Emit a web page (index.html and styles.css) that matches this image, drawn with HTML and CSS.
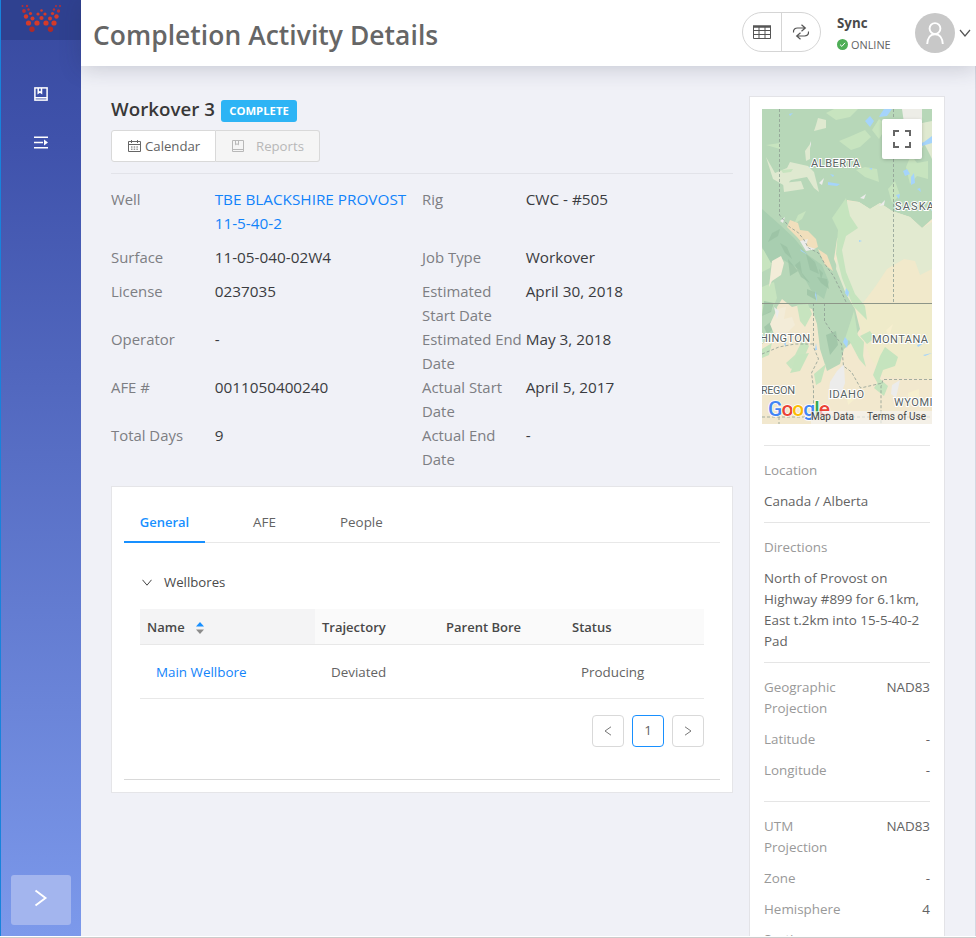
FILE: index.html
```html
<!DOCTYPE html>
<html lang="en">
<head>
<meta charset="utf-8">
<title>Completion Activity Details</title>
<link rel="stylesheet" href="styles.css">
</head>
<body>
<div class="app">
  <aside class="sidebar">
    <div class="brand">
      <svg width="40" height="28" viewBox="0 0 40 28" fill="#d63a28">
        <g fill="#b92f35"><circle cx="1.5" cy="2" r="1"/><circle cx="6" cy="2" r="1.2"/><circle cx="35" cy="2" r="1"/><circle cx="39" cy="2" r="1"/><circle cx="3" cy="7" r="1.9"/><circle cx="7.500" cy="5.500" r="1.200"/><circle cx="33" cy="5.500" r="1.200"/><circle cx="37.500" cy="7" r="1.700"/></g>
        <circle cx="5" cy="12.500" r="2.200"/><circle cx="9.500" cy="9.500" r="1.600"/><circle cx="31.500" cy="9.500" r="1.600"/><circle cx="35.500" cy="12.500" r="2.200"/><circle cx="20.500" cy="6.500" r="1.300"/><circle cx="17" cy="10" r="1.600"/><circle cx="24" cy="10" r="1.600"/><circle cx="11.500" cy="14.500" r="2"/><circle cx="20.500" cy="14" r="2.100"/><circle cx="29" cy="14.500" r="2"/><circle cx="7.500" cy="19" r="2.600"/><circle cx="16" cy="19" r="2.600"/><circle cx="25" cy="19" r="2.600"/><circle cx="33" cy="19" r="2.600"/>
        <circle cx="11" cy="25.300" r="2.700" fill="#ac2a2a"/><circle cx="29.500" cy="25.300" r="2.700" fill="#ac2a2a"/>
      </svg>
    </div>
    <nav class="side-nav">
      <svg width="14" height="14" viewBox="0 0 14 14" fill="none" stroke="#fff" stroke-width="1.5"><rect x=".9" y=".9" width="12.200" height="12.200"/><path d="M4.200 1v5l1.700-1.200L7.500 6V1M1 10.800h12"/></svg>
      <svg width="16" height="13" viewBox="0 0 16 13" fill="none" stroke="#fff" stroke-width="1.600"><path d="M1 1.200h14M1 6.500h9M1 11.800h14"/><path d="M11 3.500v6l4-3z" fill="#fff" stroke="none"/></svg>
    </nav>
    <button class="expand" type="button" aria-label="Expand"><svg width="14" height="18" viewBox="0 0 14 18" fill="none" stroke="#fff" stroke-width="1.900"><path d="M1.500 1.500 11.500 9 1.500 16.500"/></svg></button>
  </aside>

  <div class="page">
    <header class="topbar">
      <h1>Completion Activity Details</h1>
      <div class="pill">
        <span><svg width="18" height="14" viewBox="0 0 18 14" fill="none" stroke="#555" stroke-width="1"><path d="M.5 1.500h17v12H.5zM.5 5.500h17M.5 9.500h17M6 2v11.500M12 2v11.500"/><path d="M0 1.500h18" stroke-width="2.500"/></svg></span>
        <span><svg width="18" height="16" viewBox="0 0 18 16" fill="none" stroke="#555" stroke-width="1.200"><path d="M1.500 8.500C1 5 3.500 4 5.500 4H13M9.500 .8 13.300 4 9.500 7.200M16.500 7.500c.5 3.500-2 4.500-4 4.500H5M8.500 8.800 4.700 12l3.800 3.200"/></svg></span>
      </div>
      <div class="sync">
        <strong>Sync</strong>
        <span class="status"><svg width="11" height="11" viewBox="0 0 11 11"><circle cx="5.500" cy="5.500" r="5.500" fill="#4fae57"/><path d="M3 5.600 4.900 7.400 8 3.800" fill="none" stroke="#fff"/></svg>ONLINE</span>
      </div>
      <div class="avatar"><svg width="18" height="23" viewBox="0 0 18 23" fill="none" stroke="#fff" stroke-width="1.900"><circle cx="9" cy="6.500" r="5.400"/><path d="M1.200 22c.2-5.700 3-9.800 7.800-9.800s7.600 4.100 7.800 9.800"/></svg></div>
      <svg class="caret" width="12" height="8" viewBox="0 0 12 8" fill="none" stroke="#555" stroke-width="1.200"><path d="M1 1l5 6 5-6"/></svg>
    </header>

    <div class="content">
      <main class="main">
        <div class="heading"><h2>Workover 3</h2><span class="tag">COMPLETE</span></div>
        <div class="actions">
          <button type="button"><svg width="13" height="12" viewBox="0 0 13 12" fill="none" stroke="#666"><path d="M.5 1.500h12v10H.5zM.5 4.500h12M3.500 0v3M9.500 0v3"/><path d="M3 7h7.500M3 9.200h7.500" stroke-dasharray="1.500 1.200"/></svg><span>Calendar</span></button>
          <button type="button" disabled><svg width="12" height="12" viewBox="0 0 12 12" fill="none" stroke="#b8b8b8"><path d="M.5.500h11v11H.5zM.5 9.500h11M3.500.500v4.300L5 3.800l1.500 1V.5"/></svg><span>Reports</span></button>
        </div>
        <dl class="details">
          <dt>Well</dt><dd><a>TBE BLACKSHIRE PROVOST<br>11-5-40-2</a></dd><dt>Rig</dt><dd>CWC - #505</dd>
          <dt>Surface</dt><dd>11-05-040-02W4</dd><dt>Job Type</dt><dd>Workover</dd>
          <dt>License</dt><dd>0237035</dd><dt>Estimated<br>Start Date</dt><dd>April 30, 2018</dd>
          <dt>Operator</dt><dd>-</dd><dt>Estimated End<br>Date</dt><dd>May 3, 2018</dd>
          <dt>AFE #</dt><dd>0011050400240</dd><dt>Actual Start<br>Date</dt><dd>April 5, 2017</dd>
          <dt>Total Days</dt><dd>9</dd><dt>Actual End<br>Date</dt><dd>-</dd>
        </dl>
        <section class="card">
          <div class="tabs"><span class="tab active">General</span><span class="tab afe">AFE</span><span class="tab">People</span></div>
          <div class="panel">
            <div class="panel-title"><svg width="10" height="7" viewBox="0 0 10 7" fill="none" stroke="#444"><path d="M.5.800 5 6.200 9.500.800"/></svg><span>Wellbores</span></div>
            <table>
              <colgroup><col class="c1"><col class="c2"><col class="c3"><col></colgroup>
              <thead><tr><th class="sorted">Name<svg width="8" height="12" viewBox="0 0 8 12"><path d="M0 4.500 4 0l4 4.500z" fill="#1890ff"/><path d="M0 7.500 4 12l4-4.500z" fill="#8c8c8c"/></svg></th><th>Trajectory</th><th>Parent Bore</th><th>Status</th></tr></thead>
              <tbody><tr><td><a>Main Wellbore</a></td><td>Deviated</td><td></td><td>Producing</td></tr></tbody>
            </table>
            <div class="pager">
              <span><svg width="8" height="10" viewBox="0 0 8 10" fill="none" stroke="#777"><path d="M7 .8 1 5l6 4.200"/></svg></span>
              <span class="current">1</span>
              <span><svg width="8" height="10" viewBox="0 0 8 10" fill="none" stroke="#777"><path d="M1 .8 7 5 1 9.200"/></svg></span>
            </div>
          </div>
        </section>
      </main>

      <aside class="info">
        <div class="map">
          <svg width="170" height="315" viewBox="0 0 170 315">
            <rect width="170" height="315" fill="#f2e8ce"/>
            <path d="M0 0H170V110L160 119 148 108 130 102 118 94 108 100 97 93 85 91 83 118 75 130 72 150 78 165 84 185 93 200 98 220 88 235 82 240 78 255 65 262 58 240 55 215 50 200 38 196 30 198 20 190 15 198 12 225 0 235Z" fill="#b7d7b8"/>
            <path d="M78 120L85 92 97 93 108 100 118 94 130 102 148 108 160 119 170 113V194H90L84 185 74 160Z" fill="#e2ead0"/>
            <path d="M125 160l17-10 11 2 5 14 12-6v34H101l12-16z" fill="#f1e9cb"/>
            <path d="M94 194h76v76l-48-2-14-20-8-22z" fill="#efebca"/>
            <path d="M84 89l4 18 8 12-12 8-4 14 4 22 9 22 10 12 2 14-14-14-11-28-6-24 2-24-6-12zM92 202l4 26 8 30-7-8-10-19-6 5z" fill="#c5e4be"/>
            <g fill="#dfe9d0"><path d="M4 48l9 16 12-5 3-6 18 4 6 6 5 20-5-4-7-11-16 3-6 6-12-7zM44 52l-1-10 5-7v15zM54 16l2-7 8 2v8l-12 3zM21 74l18-2 3 8-20 3zM160 14l10-2v38l-8-16-5 14-8 2-6-7 6-14z"/></g>
            <path d="M140 0h20v28h-16z" fill="#edede7"/>
            <g fill="#c7e4bf"><path d="M77 32l10-4 16-7 6 7-11 10-9 3zM103 58l12 2 2 13-14-5-9-7zM64 4l8-4h24l-8 8-14 3zM117 10l8 7-8 13-7-9zM144 58l5-12 6 8 11-2v18l-11-3-7 8zM36 106l8-4-4 8-8 5zM4 36l14-2v6zM19 61l12-1-2 3-8 1zM0 140l12 6-4 13-8 4zM0 178l12-5 3 16-5 12-10 6zM35 196l11-1 4 10-7 13-5-6zM33 246l8-16 6 7-6 14-12 9-5-6zM126 80l7-8 5 14-8 8z"/></g>
            <path d="M0 100l17 15 15 14 14 17 14 10 7 17-5 17-13-9-11-20-18-11-11 4-9-16z" fill="#a8ceb0"/>
            <g fill="#96bfa2" opacity=".65"><path d="M44 145l9 8 4 12-9-4zM55 168l10 2 2 10-8-6zM10 124l8-4-2 7-10 6zM26 150l10 12-8 5zM45 180l10 4-1 7-9-5zM2 192l10 2-3 9-9 4zM18 134l7 4 5 12-7-6zM38 152l2 12 8 10-9-6-6-12zM2 218l9-7 2 8-8 6zM57 160l4 4-2 7zM64 226l10-4 2 14-8 10z"/></g>
            <path d="M10 152l9-5 3 7-3 12-9 6-3 6zM15 200l9-2-2 12 8-2 3 8-14 14-7-5-4-10z" fill="#f3ecd8"/>
            <g fill="#f1dfbc"><path d="M28 111l8 3 2 7 8 1 8 8 2 8-6 3-9-6-6-7-10-10zM56 140l9 6 6 16-8-6z"/></g>
            <g fill="#ececeb"><path d="M75 262l7-7 1 19-5 14-12 3 2-18zM130 276l8-5-4 18-5-4zM38 132l8-2-2 7 10 3-10 2zM18 112l5-4-2 6zM57 74l5-5-2 7zM98 89l6-4-2 5zM117 97l6-6-1 5zM12 198l5 4-2 8zM48 35l1-3v7z"/></g>
            <g fill="#f6efcf"><path d="M84 281l8 10-6 5zM146 284l11-4v12l-10 4zM124 221l7-6-4 13z"/></g>
            <g fill="#c5e4be"><path d="M98 227l10-5 5 7-8 6zM118 247l5-9 13 10-3 9-12 4-5 14-5-9zM29 262l6-16 12-2-9 18-10 2zM52 265l12-10-5 18-5 3zM0 240l10-6-3 12-7 3zM118 270l8 7-4 10-10-8zM92 222l10 11-1 15-8-7z"/></g>
            <g fill="#a5d4fb"><path d="M103 12l5-5 4 5-4 6zM118 6l4-6h8l-5 7-8 1zM141 62l4-2 3 5-5 2zM149 68l3-4 1 10-4 2zM157 35l5-2 8-6v7l-10 3zM66 73l12 2-3 2-9-1zM68 65l4 1-1 2zM134 86l4-1-1 5zM155 80l3-1 1 4zM84 179l3 4-1 5-3-4zM83 228l3 4-1 7-4-6zM53 241l1-7 1 7zM38 140l8 6-7-4zM54 182l1 11-2-7zM22 235l2-3v6zM155 236l10-4-9 6zM97 131l3 1-3 1zM27 5l4-1-3 3zM107 59h3v2zM161 246l9-2-7 3z"/></g>
            <g fill="none" stroke="#8f9e93" stroke-opacity=".8" stroke-dasharray="3 2"><path d="M17.500 0v106l10 12 8 5 6 7 5 9 10 5 7 12 8 11 7 14 6 13M131.500 0v194M51.500 194v44l5 12-7 14 2 15v29M62.500 194v18l8 12 9 11 2 22 8 6 9 16 22-5M0 245l17-7 16-3h19M170 270.500h-49l-2 7v38M0 308h170M17 308v7"/></g>
            <path d="M0 194.500h170" stroke="#8d9588"/>
            <g class="place"><text x="49" y="58" textLength="49">ALBERTA</text><text x="133" y="101" textLength="46">SASKAT</text><text x="-9" y="233" textLength="57">SHINGTON</text><text x="110" y="234" textLength="56">MONTANA</text><text x="-8" y="285" textLength="41">OREGON</text><text x="67" y="289" textLength="35">IDAHO</text><text x="132" y="297" textLength="55">WYOMING</text></g>
            <g class="google"><text x="6" y="307" textLength="62"><tspan fill="#4285f4">G</tspan><tspan fill="#ea4335">o</tspan><tspan fill="#fbbc05">o</tspan><tspan fill="#4285f4">g</tspan><tspan fill="#34a853">l</tspan><tspan fill="#ea4335">e</tspan></text></g>
            <path d="M49 302h121v13H49z" fill="#f5f5f5" fill-opacity=".65"/>
            <g class="credit"><text x="49" y="311" textLength="43">Map Data</text><text x="105" y="311" textLength="59">Terms of Use</text></g>
          </svg>
          <span class="fullscreen"><svg width="18" height="18" viewBox="0 0 18 18" fill="none" stroke="#666" stroke-width="2"><path d="M1 6V1h5M12 1h5v5M17 12v5h-5M6 17H1v-5"/></svg></span>
        </div>
        <section><p class="label">Location</p><p>Canada / Alberta</p></section>
        <section><p class="label">Directions</p><p>North of Provost on<br>Highway #899 for 6.1km,<br>East t.2km into 15-5-40-2<br>Pad</p></section>
        <section class="pairs"><div><span>Geographic<br>Projection</span><b>NAD83</b></div><div><span>Latitude</span><b>-</b></div><div><span>Longitude</span><b>-</b></div></section>
        <section class="pairs"><div><span>UTM<br>Projection</span><b>NAD83</b></div><div><span>Zone</span><b>-</b></div><div><span>Hemisphere</span><b>4</b></div><div class="next"><span>Section</span></div></section>
      </aside>
    </div>
  </div>
</div>
</body>
</html>
```
FILE: styles.css
```css
* { box-sizing: border-box; }
body { margin: 0; width: 976px; height: 938px; overflow: hidden; background: #fff; font: 13.4px/21px "Open Sans", "Noto Sans", sans-serif; color: #636363; border-bottom: 1px solid #ccc; }
h1, h2, p, dl, dd { margin: 0; }
svg { display: block; flex: none; }
a { color: #1283fa; }
.app { display: flex; height: 936px; overflow: hidden; }
.sidebar { width: 81px; flex: none; display: flex; flex-direction: column; align-items: center; border-left: 1px solid #1783dc; background: linear-gradient(#384a9f, #3f52ab 15%, #7c99eb); }
.brand { align-self: stretch; height: 40px; padding: 4px 0 0 20px; background: #2f4190; }
.side-nav { flex: 1; display: flex; flex-direction: column; align-items: center; gap: 35px; padding-top: 47px; }
.expand { width: 60px; height: 50px; margin-bottom: 11px; border: 0; border-radius: 3px; background: #a3b5ee; display: flex; align-items: center; justify-content: center; padding: 0 0 4px; }
.page { flex: 1; min-width: 0; display: flex; flex-direction: column; background: #f0f1f7; }
.topbar { position: relative; height: 66px; flex: none; display: flex; align-items: center; background: #fff; box-shadow: 0 2px 22px rgba(40, 45, 75, .22); padding: 0 5px 0 12px; }
h1 { flex: 1; font-size: 26.4px; line-height: 40px; font-weight: 600; color: #666; padding-top: 4px; letter-spacing: .06px; white-space: nowrap; }
.pill { display: flex; width: 79px; height: 40px; border: 1px solid #d5d5d5; border-radius: 20px; margin: 0 16px 2px 0; }
.pill span { flex: 1; display: flex; align-items: center; justify-content: center; }
.pill span + span { border-left: 1px solid #d5d5d5; }
.sync { width: 78px; display: flex; flex-direction: column; padding-top: 2px; }
.sync strong { font-size: 13.3px; line-height: 21px; color: #4a4a4a; }
.status { display: flex; align-items: center; gap: 3px; font-size: 10.9px; line-height: 22px; }
.avatar { width: 40px; height: 40px; border-radius: 50%; background: #c8c8c8; display: flex; align-items: center; justify-content: center; }
.caret { margin-left: 4px; }
.content { flex: 1; min-height: 0; display: flex; gap: 16px; padding: 30px 30px 0; border-right: 1px solid #d5d7e0; }
.main { width: 622px; flex: none; }
.heading { display: flex; align-items: center; height: 28px; }
h2 { width: 110px; height: 28px; font-size: 18.7px; line-height: 26px; font-weight: 600; letter-spacing: .05px; color: #383838; white-space: nowrap; }
.tag { margin-top: 2px; width: 76px; height: 22px; border-radius: 3px; background: #2db4f5; color: #fff; font-size: 11.3px; line-height: 22px; font-weight: 700; text-align: center; }
.actions { display: flex; margin-top: 6px; }
.actions button { height: 32px; width: 105px; border: 1px solid #d9d9d9; border-radius: 3px 0 0 3px; background: #fff; font: inherit; font-size: 13.2px; color: #636363; display: flex; align-items: center; padding: 0 0 0 16px; gap: 4px; }
.actions button + button { border-left: 0; width: 104px; border-radius: 0 3px 3px 0; background: #f5f5f5; color: #b8b8b8; gap: 12px; }
.details { display: grid; grid-template-columns: 1fr 2fr 1fr 2fr; margin-top: 11px; padding: 13px 0 1px; border-top: 1px solid #e2e3e9; font-size: 14.9px; line-height: 24px; }
dt { color: #7d7e83; white-space: nowrap; }
dd { color: #3a3b40; font-size: 15.3px; margin-bottom: 10px; }
.card { height: 307px; margin-top: 14px; padding: 12px; background: #fff; border: 1px solid #e5e5e8; }
.tabs { display: flex; height: 44px; border-bottom: 1px solid #e8e8e8; }
.tab { height: 44px; line-height: 46px; width: 42px; margin-left: 63px; }
.tab.active { width: 81px; margin-left: 0; font-size: 13px; text-align: center; color: #1890ff; font-weight: 600; border-bottom: 2px solid #1890ff; }
.tab.afe { width: 24px; margin-left: 48px; }
.panel { height: 237px; padding: 29px 16px 0; border-bottom: 1px solid #d9d9d9; }
.panel-title { display: flex; align-items: center; gap: 12px; padding-left: 2px; color: #4a4a4a; font-size: 13.2px; }
table { margin-top: 16px; width: 564px; border-collapse: collapse; table-layout: fixed; }
.c1 { width: 175px; } .c2 { width: 124px; } .c3 { width: 126px; }
th, td { text-align: left; border-bottom: 1px solid #e8e8e8; }
th { height: 35px; padding: 2px 7px 0; background: #fafafa; color: #484848; font-size: 13px; font-weight: 600; }
th.sorted { background: #f4f4f5; }
th svg { display: inline-block; margin-left: 11px; vertical-align: -2px; }
td { height: 54px; padding: 2px 16px 0; }
.pager { display: flex; justify-content: flex-end; gap: 8px; margin-top: 16px; }
.pager span { width: 32px; height: 32px; border: 1px solid #d9d9d9; border-radius: 4px; display: flex; align-items: center; justify-content: center; }
.pager .current { border-color: #1890ff; }
.info { width: 196px; flex: none; height: 870px; background: #fff; border: 1px solid #e3e3e7; padding: 12px 14px 0; }
.map { position: relative; width: 170px; height: 315px; margin: 0 -2px 21px; overflow: hidden; }
.fullscreen { position: absolute; right: 10px; top: 10px; width: 40px; height: 40px; border-radius: 2px; background: #fff; box-shadow: 0 1px 4px -1px rgba(0,0,0,.3); display: flex; align-items: center; justify-content: center; }
.place { font: 400 11px Roboto, sans-serif; fill: #58625f; stroke: #fff; stroke-width: 2px; paint-order: stroke; }
.google { font: 500 21px Roboto, sans-serif; stroke: #fff; stroke-width: 1.5px; paint-order: stroke; }
.credit { font: 10px Roboto, sans-serif; fill: #444; }
.info section { border-top: 1px solid #e5e5e5; padding-top: 14px; white-space: nowrap; }
.info p { margin-bottom: 10px; }
.info .label, .pairs span { color: #999; }
.info .pairs { padding-bottom: 10px; }
.pairs div { display: flex; justify-content: space-between; margin-bottom: 10px; }
.pairs .next { margin-top: -1px; }
.pairs b { font-weight: 400; }
```
